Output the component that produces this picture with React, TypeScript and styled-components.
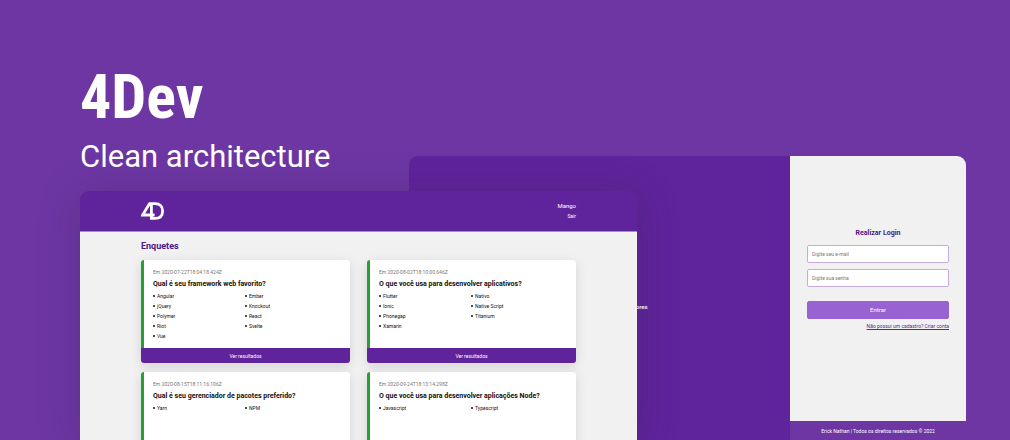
import React from "react";
import styled, { createGlobalStyle } from "styled-components";

const colors = {
  backdrop: "#6d36a3",
  brand: "#5f239b",
  title: "#4b1782",
  surface: "#f1f1f1",
  button: "#9962d3",
  field: "#c6abe3",
  green: "#24a035",
};

const GlobalStyle = createGlobalStyle`
  * { box-sizing: border-box; }
  body {
    margin: 0;
    background: ${colors.backdrop};
    font-family: Roboto, "Liberation Sans", sans-serif;
    color: #111;
  }
  h1, h2, h3, p, ul { margin: 0; padding: 0; }
`;

const Banner = styled.main`
  display: grid;
  grid-template-columns: 329fr 228fr 329fr;
  grid-template-rows: 156px 35px 1fr;
  height: 100vh;
  padding: 0 44px 0 80px;
  overflow: hidden;
`;

const Intro = styled.header`
  grid-area: 1 / 1 / 3 / 3;
  padding-top: 60px;
  color: #fff;
`;

const ProjectName = styled.h1`
  font: 700 62px/74px "Roboto Condensed", Roboto, sans-serif;
`;

const Tagline = styled.p`
  font-size: 31px;
  line-height: 46px;
  font-weight: 400;
`;

const LoginWindow = styled.section`
  grid-area: 2 / 2 / 4 / 4;
  display: grid;
  grid-template-columns: 381fr 176fr;
  border-radius: 9px 9px 0 0;
  overflow: hidden;
  background: ${colors.brand};
`;

const BrandPane = styled.div`
  display: flex;
  flex-direction: column;
  align-items: center;
  padding-top: 124px;
  gap: 4px;
  color: #fff;
`;

const Slogan = styled.p`
  font-size: 6px;
  line-height: 10px;
  font-weight: 700;
`;

const LoginPane = styled.div`
  display: flex;
  flex-direction: column;
  background: ${colors.surface};
`;

const LoginForm = styled.form`
  flex: 1;
  display: flex;
  flex-direction: column;
  padding: 72px 17px 0;
`;

const LoginTitle = styled.h2`
  margin-bottom: 7px;
  font-size: 7px;
  line-height: 10px;
  text-align: center;
  color: ${colors.title};
`;

const Field = styled.input`
  height: 18px;
  margin-bottom: 6px;
  padding: 0 4px;
  border: 1px solid ${colors.field};
  border-radius: 2px;
  background: #fff;
  font: 400 5px/8px Roboto, sans-serif;
  &::placeholder { color: #777; }
`;

const Submit = styled.button`
  height: 18px;
  margin-top: 8px;
  padding: 0;
  border: 1px solid ${colors.button};
  border-radius: 2px;
  background: ${colors.button};
  color: #fff;
  font: 400 6px/8px Roboto, sans-serif;
`;

const SignUp = styled.a`
  align-self: flex-end;
  margin-top: 3px;
  font-size: 5px;
  line-height: 8px;
  color: ${colors.brand};
`;

const Copyright = styled.footer`
  padding: 6px 0 5px;
  background: ${colors.backdrop};
  color: #fff;
  font-size: 5px;
  line-height: 8px;
  text-align: center;
`;

const PollsWindow = styled.section`
  grid-area: 3 / 1 / 4 / 3;
  z-index: 1;
  display: flex;
  flex-direction: column;
  min-height: 0;
  border-radius: 9px 9px 0 0;
  box-shadow: 0 4px 40px rgba(60, 40, 80, 0.3);
`;

const TopBar = styled.header`
  display: flex;
  flex: none;
  justify-content: space-between;
  align-items: center;
  height: 40px;
  padding: 0 61px;
  border-radius: 9px 9px 0 0;
  background: ${colors.brand};
  color: #fff;
`;

const Account = styled.div`
  display: flex;
  flex-direction: column;
  align-items: flex-end;
  font-size: 6px;
  line-height: 10px;
`;

const SignOut = styled.a`
  color: #fff;
  font-size: 5px;
  text-decoration: none;
`;

const Content = styled.div`
  flex: 1;
  min-height: 0;
  padding: 8px 61px 0;
  overflow: hidden;
  border-top: 1px solid #a98bc8;
  background: ${colors.surface};
`;

const PageTitle = styled.h2`
  margin-bottom: 8px;
  font-size: 9px;
  line-height: 12px;
  color: ${colors.title};
`;

const PollGrid = styled.div`
  display: grid;
  grid-template-columns: 1fr 1fr;
  gap: 9px 17px;
`;

const PollCard = styled.article`
  display: flex;
  flex-direction: column;
  height: 103px;
  border-radius: 3px;
  overflow: hidden;
  background: #fff;
  box-shadow: 0 3px 12px rgba(0, 0, 0, 0.12);
`;

const PollBody = styled.div`
  flex: 1;
  padding: 8px 13px 0 9px;
  border-left: 3px solid ${colors.green};
`;

const PollDate = styled.time`
  display: block;
  font-size: 5px;
  line-height: 8px;
  color: #777;
`;

const PollQuestion = styled.h3`
  margin: 4px 0 2px;
  font-size: 7px;
  line-height: 9px;
  color: #111;
`;

const Answers = styled.ul`
  display: grid;
  grid-template-columns: 1fr 1fr;
  grid-template-rows: repeat(${(p: { $rows: number }) => p.$rows}, 10px);
  grid-auto-flow: column;
  list-style: none;
`;

const Answer = styled.li`
  display: flex;
  align-items: center;
  gap: 2px;
  font-size: 5px;
  line-height: 10px;
  &::before {
    content: "";
    width: 2px;
    height: 2px;
    border-radius: 1px;
    background: #111;
  }
`;

const Results = styled.button`
  height: 15px;
  padding: 0;
  border: 0;
  background: ${colors.brand};
  color: #fff;
  font: 400 5px/8px Roboto, sans-serif;
`;

function Logo() {
  return (
    <svg width="23" height="18" viewBox="0 0 23 18" fill="none" stroke="#fff" strokeWidth="2.8" role="img" aria-label="4D">
      <path d="M8.6 1.6L1.6 13H13.6M10.4 1.6V16.4H14C19.2 16.4 21.6 13.4 21.6 9C21.6 4.6 19.2 1.6 14 1.6H7.8" />
    </svg>
  );
}

const polls = [
  {
    date: "2020-07-22T18:04:18.424Z",
    question: "Qual é seu framework web favorito?",
    answers: ["Angular", "jQuery", "Polymer", "Riot", "Vue", "Ember", "Knockout", "React", "Svelte"],
    hasResults: true,
  },
  {
    date: "2020-08-02T18:10:00.646Z",
    question: "O que você usa para desenvolver aplicativos?",
    answers: ["Flutter", "Ionic", "Phonegap", "Xamarin", "Nativo", "Native Script", "Titanium"],
    hasResults: true,
  },
  {
    date: "2020-08-15T18:11:16.106Z",
    question: "Qual é seu gerenciador de pacotes preferido?",
    answers: ["Yarn", "NPM"],
    hasResults: false,
  },
  {
    date: "2020-09-24T18:13:14.298Z",
    question: "O que você usa para desenvolver aplicações Node?",
    answers: ["Javascript", "Typescript"],
    hasResults: false,
  },
];

export default function App() {
  return (
    <>
      <GlobalStyle />
      <Banner>
        <Intro>
          <ProjectName>4Dev</ProjectName>
          <Tagline>Clean architecture</Tagline>
        </Intro>

        <LoginWindow>
          <BrandPane>
            <Logo />
            <Slogan>4Dev Enquetes para programadores</Slogan>
          </BrandPane>
          <LoginPane>
            <LoginForm>
              <LoginTitle>Realizar Login</LoginTitle>
              <Field type="email" placeholder="Digite seu e-mail" aria-label="Digite seu e-mail" />
              <Field type="password" placeholder="Digite sua senha" aria-label="Digite sua senha" />
              <Submit type="button">Entrar</Submit>
              <SignUp href="#cadastro">Não possui um cadastro? Criar conta</SignUp>
            </LoginForm>
            <Copyright>Erick Nathan | Todos os direitos reservados © 2022</Copyright>
          </LoginPane>
        </LoginWindow>

        <PollsWindow>
          <TopBar>
            <Logo />
            <Account>
              <span>Mango</span>
              <SignOut href="#sair">Sair</SignOut>
            </Account>
          </TopBar>
          <Content>
            <PageTitle>Enquetes</PageTitle>
            <PollGrid>
              {polls.map((poll) => (
                <PollCard key={poll.date}>
                  <PollBody>
                    <PollDate dateTime={poll.date}>Em {poll.date}</PollDate>
                    <PollQuestion>{poll.question}</PollQuestion>
                    <Answers $rows={Math.ceil(poll.answers.length / 2)}>
                      {poll.answers.map((answer) => (
                        <Answer key={answer}>{answer}</Answer>
                      ))}
                    </Answers>
                  </PollBody>
                  {poll.hasResults && <Results type="button">Ver resultados</Results>}
                </PollCard>
              ))}
            </PollGrid>
          </Content>
        </PollsWindow>
      </Banner>
    </>
  );
}
